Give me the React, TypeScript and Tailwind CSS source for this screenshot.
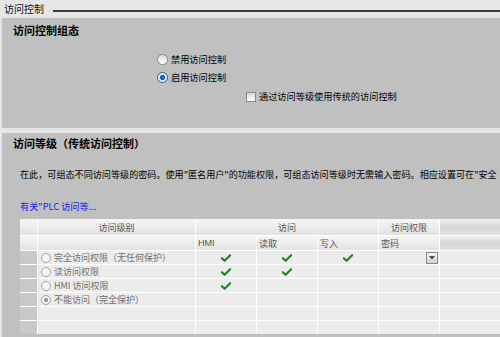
import React from "react";

const Check = () => (
  <svg width="10" height="8" viewBox="0 0 10 8">
    <path d="M0.8 4.2 L3.6 6.8 L9.2 1.2" fill="none" stroke="#178a17" strokeWidth="2.2" strokeLinecap="round" strokeLinejoin="round" />
  </svg>
);

const Radio = ({ checked, blue }: { checked?: boolean; blue?: boolean }) => {
  if (blue) {
    return (
      <span className="w-[11px] h-[11px] rounded-full border border-[#2c628b] bg-[radial-gradient(circle,#2b6fd6_0%,#1a5bb8_35%,#cfe6fb_40%,#e9f4fd_100%)] shrink-0" />
    );
  }
  return (
    <span className="w-[11px] h-[11px] rounded-full border border-[#8a8a8a] bg-[linear-gradient(#dcdcdc,#ffffff)] shrink-0 flex items-center justify-center">
      {checked ? <span className="w-[5px] h-[5px] rounded-full bg-[#8f8f8f]" /> : null}
    </span>
  );
};

const SmallRadio = ({ checked }: { checked?: boolean }) => (
  <span className="w-[10px] h-[10px] rounded-full border border-[#a0a0a0] bg-[#f6f6f6] shrink-0 flex items-center justify-center">
    {checked ? <span className="w-[4px] h-[4px] rounded-full bg-[#8c8c8c]" /> : null}
  </span>
);

const hdr = "bg-[linear-gradient(#f6f6f6,#e2e2e2)] text-[#555] text-[9px] leading-none flex items-center";
const cell = "bg-[#ececec] flex items-center";
const rowHead = "bg-[#c9c9c9]";

const rows: { label: string; hmi?: boolean; read?: boolean; write?: boolean; checked?: boolean; dd?: boolean }[] = [
  { label: "完全访问权限（无任何保护）", hmi: true, read: true, write: true, dd: true },
  { label: "读访问权限", hmi: true, read: true },
  { label: "HMI 访问权限", hmi: true },
  { label: "不能访问（完全保护）", checked: true },
  { label: "" },
  { label: "" },
];

export default function App() {
  return (
    <div className="w-[500px] h-[337px] overflow-hidden bg-[#e6e6e6] flex flex-col font-['Noto_Sans_CJK_SC',sans-serif] text-black">
      <div className="h-[18px] flex items-center pl-[4px] shrink-0">
        <span className="text-[10px] leading-none text-[#111]">访问控制</span>
        <div className="flex-1 ml-[9px] h-[2px] bg-[#3c3c3c] mt-[4px]" />
      </div>
      <div className="ml-[2px] h-[110px] shrink-0 bg-[#c0c0c0] pt-[5px] pl-[11px]">
        <div className="text-[11px] font-bold leading-[14px]">访问控制组态</div>
        <div className="pl-[144px] pt-[17px] flex flex-col gap-[7px] text-[9.2px] leading-[11px]">
          <div className="flex items-center gap-[3px]">
            <Radio />
            <span>禁用访问控制</span>
          </div>
          <div className="flex items-center gap-[3px]">
            <Radio blue />
            <span>启用访问控制</span>
          </div>
          <div className="flex items-center gap-[3px] pl-[89px] mt-[1px]">
            <span className="w-[10px] h-[10px] border border-[#8a8a8a] bg-[linear-gradient(#dadada,#ffffff)] shrink-0" />
            <span>通过访问等级使用传统的访问控制</span>
          </div>
        </div>
      </div>
      <div className="h-[5px] shrink-0" />
      <div className="ml-[2px] flex-1 bg-[#c0c0c0] pt-[3px] pl-[11px] min-h-0 overflow-hidden">
        <div className="text-[11px] font-bold leading-[14px]">访问等级（传统访问控制）</div>
        <div className="pl-[7px] pt-[18px] text-[9.1px] leading-[12px] whitespace-nowrap">
          在此，可组态不同访问等级的密码。使用"匿名用户"的功能权限，可组态访问等级时无需输入密码。相应设置可在"安全
        </div>
        <div className="pl-[7px] pt-[20px] text-[9.2px] leading-[12px] text-[#1a1aee]">有关"PLC 访问等...</div>
        <div className="ml-[7px] mt-[7px] w-[500px] grid grid-cols-[17px_157px_60px_60px_60px_60px_80px] gap-[1px] bg-white auto-rows-[13px] grid-rows-[16px_14px]">
          <div className={hdr} />
          <div className={hdr + " justify-center"}>访问级别</div>
          <div className={hdr + " col-span-3 justify-center"}>访问</div>
          <div className={hdr + " justify-center"}>访问权限</div>
          <div className="bg-[linear-gradient(#f2f2f2,#d4d4d4_50%,#e4e4e4)]" />

          <div className={hdr} />
          <div className={hdr} />
          <div className={hdr + " pl-[2px] text-[8px] text-[#8a8a8a] font-['Liberation_Sans',sans-serif]"}>HMI</div>
          <div className={hdr + " pl-[2px]"}>读取</div>
          <div className={hdr + " pl-[2px]"}>写入</div>
          <div className={hdr + " pl-[2px]"}>密码</div>
          <div className="bg-[linear-gradient(#f2f2f2,#d4d4d4_50%,#e4e4e4)]" />

          {rows.map((r, i) => (
            <React.Fragment key={i}>
              <div className={rowHead} />
              <div className={cell + " pl-[3px] gap-[3px] text-[9px] leading-none text-[#6e6e6e]"}>
                {r.label ? <SmallRadio checked={r.checked} /> : null}
                <span>{r.label}</span>
              </div>
              <div className={cell + " justify-center"}>{r.hmi ? <Check /> : null}</div>
              <div className={cell + " justify-center"}>{r.read ? <Check /> : null}</div>
              <div className={cell + " justify-center"}>{r.write ? <Check /> : null}</div>
              <div className={cell + " justify-end pr-[1px]"}>
                {r.dd ? (
                  <span className="w-[12px] h-[12px] border border-[#8a8a8a] bg-[linear-gradient(#f4f4f4,#d0d0d0)] flex items-center justify-center">
                    <svg width="6" height="4" viewBox="0 0 6 4">
                      <path d="M0 0 H6 L3 3.5 Z" fill="#444" />
                    </svg>
                  </span>
                ) : null}
              </div>
              <div className={cell} />
            </React.Fragment>
          ))}
        </div>
      </div>
    </div>
  );
}
